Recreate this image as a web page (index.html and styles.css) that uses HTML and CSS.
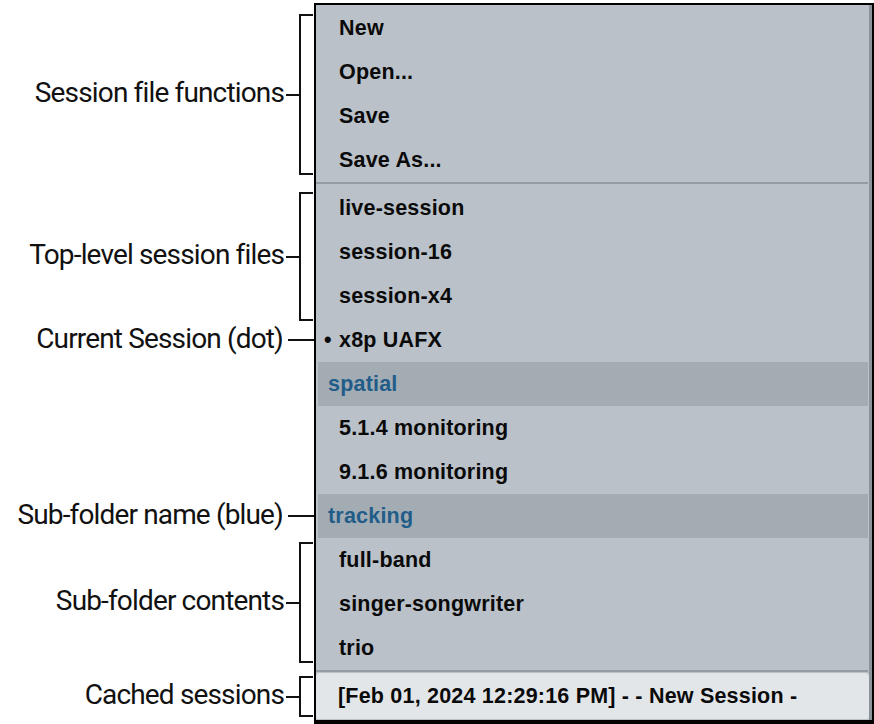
FILE: index.html
```html
<!DOCTYPE html>
<html>
<head>
<meta charset="utf-8">
<link rel="stylesheet" href="styles.css">
</head>
<body>
<div class="page">
  <div class="notes">
    <div class="note n1"><span class="label">Session file functions</span><span class="dash"></span><span class="bracket"></span></div>
    <div class="note n2"><span class="label">Top-level session files</span><span class="dash"></span><span class="bracket"></span></div>
    <div class="note n3"><span class="label">Current Session (dot)</span><span class="line"></span></div>
    <div class="note n4"><span class="label">Sub-folder name (blue)</span><span class="line"></span></div>
    <div class="note n5"><span class="label">Sub-folder contents</span><span class="dash"></span><span class="bracket"></span></div>
    <div class="note n6"><span class="label">Cached sessions</span><span class="dash"></span><span class="bracket"></span></div>
  </div>
  <div class="menu">
    <div class="item">New</div>
    <div class="item">Open...</div>
    <div class="item">Save</div>
    <div class="item">Save As...</div>
    <div class="sep"></div>
    <div class="item">live-session</div>
    <div class="item">session-16</div>
    <div class="item">session-x4</div>
    <div class="item current"><span class="dot">•</span>x8p UAFX</div>
    <div class="folder">spatial</div>
    <div class="item">5.1.4 monitoring</div>
    <div class="item">9.1.6 monitoring</div>
    <div class="folder">tracking</div>
    <div class="item">full-band</div>
    <div class="item">singer-songwriter</div>
    <div class="item">trio</div>
    <div class="sep last"></div>
    <div class="cached">[Feb 01, 2024 12:29:16 PM] - - New Session -</div>
  </div>
</div>
</body>
</html>
```

FILE: styles.css
```css
html, body {
  margin: 0;
  padding: 0;
  background: #ffffff;
}

.page {
  display: flex;
  width: 874px;
  height: 724px;
  overflow: hidden;
}

/* annotations */
.notes {
  width: 314px;
  flex: none;
  display: flex;
  flex-direction: column;
}

.note {
  display: flex;
  align-items: center;
  justify-content: flex-end;
  flex: none;
}

.n1 { margin-top: 14px; height: 161px; }
.n2 { margin-top: 17px; height: 129px; }
.n3 { margin-top: 9px; height: 20px; }
.n4 { margin-top: 156px; height: 20px; }
.n5 { margin-top: 16px; height: 121px; }
.n6 { margin-top: 13px; height: 41px; }

.label {
  font-family: Roboto, "Liberation Sans", Arial, sans-serif;
  font-size: 28px;
  letter-spacing: -0.85px;
  color: #111111;
  white-space: nowrap;
  margin-right: 2px;
  padding-bottom: 3px;
  line-height: 1;
}

.dash {
  width: 13px;
  height: 2px;
  background: #111111;
  flex: none;
}

.bracket {
  width: 14px;
  height: 100%;
  box-sizing: border-box;
  border: 2px solid #111111;
  border-right: none;
  margin-right: 1px;
  flex: none;
}

.n3 .label, .n4 .label { margin-right: 5px; padding-bottom: 2px; }

.line {
  width: 26px;
  height: 2px;
  background: #111111;
  flex: none;
}

/* menu */
.menu {
  width: 560px;
  flex: none;
  box-sizing: border-box;
  margin-top: 3px;
  height: 721px;
  background: #bac1c8;
  border-top: 2px solid #000000;
  border-left: 2px solid #000000;
  border-right: 2px solid #000000;
  border-bottom: 4px solid #000000;
  padding: 1px 4px 1px 2px;
  box-shadow: inset -3px 0 0 #8c939a;
  display: flex;
  flex-direction: column;
  font-family: "Liberation Sans", Arial, Helvetica, sans-serif;
  font-weight: bold;
  font-size: 21.5px;
  letter-spacing: 0.2px;
  color: #0a0a0a;
}

.item {
  height: 44px;
  line-height: 44px;
  padding-left: 21px;
  white-space: nowrap;
}

.item.current {
  padding-left: 6px;
}

.dot {
  display: inline-block;
  width: 15px;
}

.folder {
  height: 44px;
  line-height: 44px;
  padding-left: 10px;
  background: #a3abb3;
  color: #225d89;
}

.sep {
  height: 4px;
  box-sizing: border-box;
  border-top: 2px solid #949ba2;
  margin-left: -2px;
}

.sep.last {
  height: 3px;
}

.cached {
  height: 46px;
  line-height: 46px;
  margin-left: -2px;
  margin-right: -1px;
  padding-left: 22px;
  background: #e3e6e9;
  border-radius: 4px 4px 2px 2px;
  white-space: nowrap;
}
```
